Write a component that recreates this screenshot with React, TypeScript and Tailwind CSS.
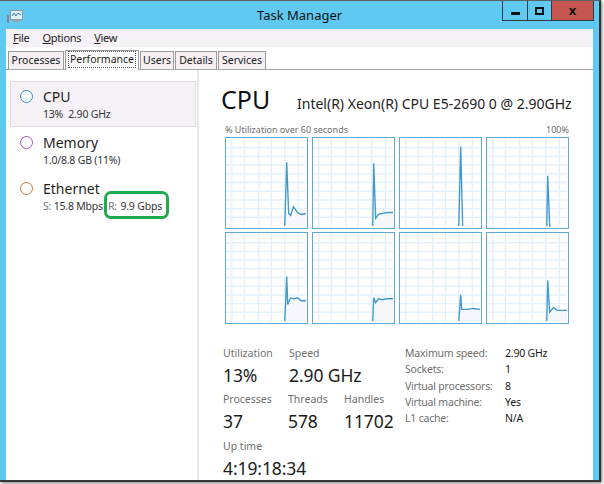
import React from 'react';

const FONT = 'font-["Noto_Sans","Open_Sans",sans-serif]';

// graph lines as traced from the picture, local coords in an 83x92 box
const GRAPHS: { line: string; fillFrom: number; fillY: number }[] = [
  { line: '61,91 63,25 65,78 67,80 70,71 74,77 78,79 83,78', fillFrom: 61, fillY: 78 },
  { line: '62,91 63,26 65,83 68,79 72,78 78,77 83,77', fillFrom: 62, fillY: 78 },
  { line: '61,91 63,9 65,91', fillFrom: 61, fillY: 91 },
  { line: '62,91 63,39 65,91 66,91', fillFrom: 62, fillY: 91 },
  { line: '61,91 63,45 64,74 67,67 70,68 74,67 78,70 83,70', fillFrom: 61, fillY: 68 },
  { line: '62,91 63,67 65,72 68,68 72,69 76,68 80,68 83,68', fillFrom: 62, fillY: 68 },
  { line: '61,91 63,64 64,79 70,79 76,78 83,79', fillFrom: 61, fillY: 79 },
  { line: '62,91 63,49 65,82 69,77 73,80 78,80 83,80', fillFrom: 62, fillY: 80 },
];

const V_LINES = [6, 19, 34, 47, 61, 75];
const H_LINES = [10, 19, 28, 37, 46, 55, 64, 73, 82];

function Graph({ line, fillFrom, fillY }: { line: string; fillFrom: number; fillY: number }) {
  return (
    <div className="w-[83px] h-[92px] border-[1.5px] border-[#5ea8d2] bg-white">
      <svg width="80" height="89" viewBox="0 0 83 92" preserveAspectRatio="none" className="block">
        {V_LINES.map((x) => (
          <line key={x} x1={x} y1="0" x2={x} y2="92" stroke="#e4f0fa" strokeWidth="1.5" />
        ))}
        {H_LINES.map((y) => (
          <line key={y} x1="0" y1={y} x2="83" y2={y} stroke="#e4f0fa" strokeWidth="1.5" />
        ))}
        <polygon points={`${fillFrom},92 ${fillFrom},${fillY} 83,${fillY} 83,92`} fill="#f6f7fd" />
        <polyline points={line} fill="none" stroke="#3f98c9" strokeWidth="1.4" />
      </svg>
    </div>
  );
}

function SideItem({
  name,
  ring,
  selected,
  children,
}: {
  name: string;
  ring: string;
  selected?: boolean;
  children: React.ReactNode;
}) {
  return (
    <div
      className={
        selected
          ? 'h-[46px] flex gap-[10px] pl-[9px] pt-[6px] border border-[#e0dbe0] bg-[#f6f1f6]'
          : 'h-[46px] flex gap-[10px] pl-[9px] pt-[6px] border border-transparent'
      }
    >
      <div className={`w-[13px] h-[13px] mt-[2px] rounded-full border-[1.5px] shrink-0 ${ring}`} />
      <div>
        <div className="text-[14px] leading-[17px] text-[#1f1f1f]">{name}</div>
        <div className="text-[10.5px] tracking-[-0.2px] leading-[15px] mt-[2px] text-[#333] whitespace-nowrap">{children}</div>
      </div>
    </div>
  );
}

function Stat({ label, value, className }: { label: string; value: string; className: string }) {
  return (
    <div className={className}>
      <div className="text-[10.5px] leading-[15px] text-[#6e6e6e] whitespace-nowrap">{label}</div>
      <div className="text-[17.5px] tracking-[-0.1px] leading-[24px] mt-[2px] text-[#1a1a1a] whitespace-nowrap">{value}</div>
    </div>
  );
}

const SPECS = [
  ['Maximum speed:', '2.90 GHz'],
  ['Sockets:', '1'],
  ['Virtual processors:', '8'],
  ['Virtual machine:', 'Yes'],
  ['L1 cache:', 'N/A'],
];

const TABS = [
  { label: 'Processes', w: 'w-[56px]' },
  { label: 'Users', w: 'w-[34px]' },
  { label: 'Details', w: 'w-[42px]' },
  { label: 'Services', w: 'w-[48px]' },
];

function Tab({ label, w }: { label: string; w: string }) {
  return (
    <div className={`${w} h-[18px] mt-[2px] pt-[1px] flex items-center justify-center text-[10.5px] text-[#222] bg-[#f3eff3] border border-[#9a9a9a] border-b-0`}>
      {label}
    </div>
  );
}

export default function App() {
  return (
    <div className={`w-[604px] h-[484px] bg-white overflow-hidden ${FONT}`}>
      <div className="w-[601px] h-[482px] flex flex-col border-t border-t-[#5a5f63] border-r-2 border-r-[#2f3438] border-b-2 border-b-[#34383b] bg-[#5fc9f2] pl-[6px] pr-[6px] shadow-[1px_1px_3px_rgba(0,0,0,0.55)]">
        {/* title bar */}
        <div className="h-[28px] shrink-0 flex items-start">
          <div className="w-[251px] pt-[9px] pl-[1px]">
            <svg width="16" height="14" viewBox="0 0 16 14">
              <rect x="3.5" y="0.5" width="12" height="9" fill="#dff2fb" stroke="#8a99a5" />
              <polyline points="5,6 7,3 9,6 11,3 14,5" fill="none" stroke="#3a7fc0" strokeWidth="1" />
              <rect x="7" y="10" width="6" height="2" fill="#9aa7b0" />
              <rect x="0" y="5" width="2" height="8" fill="#7d8a94" />
            </svg>
          </div>
          <div className="flex-1 pt-[4px] text-[13px] leading-[20px] text-[#111] whitespace-nowrap">Task Manager</div>
          <div className="flex h-[20px] -mr-[1px] border border-[#2d3e4a] border-t-0">
            <div className="w-[25px] flex items-center justify-center border-r border-[#2d3e4a]">
              <div className="w-[9px] h-[3px] mt-[5px] bg-[#111]" />
            </div>
            <div className="w-[24px] flex items-center justify-center border-r border-[#2d3e4a]">
              <div className="w-[9px] h-[8px] border-2 border-[#111]" />
            </div>
            <div className="w-[41px] flex items-center justify-center bg-[#c75650] text-[13px] font-bold text-[#111]">x</div>
          </div>
        </div>

        {/* client area */}
        <div className="flex-1 min-h-0 flex flex-col bg-white">
          <div className="h-[18px] shrink-0 bg-[#f6f1f6] flex items-center gap-[13px] pl-[7px] text-[11px] tracking-[-0.3px] text-[#222]">
            <span><span className="underline">F</span>ile</span>
            <span><span className="underline">O</span>ptions</span>
            <span><span className="underline">V</span>iew</span>
          </div>

          <div className="h-[23px] shrink-0 flex items-end pl-[2px] gap-px border-b border-[#a5a5a5] bg-white">
            <Tab {...TABS[0]} />
            <div className="w-[74px] h-[20px] -mb-px flex items-start justify-center bg-white border border-[#9a9a9a] border-b-0 text-[10.5px] text-[#222] relative">
              <span className="border border-dotted border-[#555] px-[1px] leading-[15px]">Performance</span>
            </div>
            <Tab {...TABS[1]} />
            <Tab {...TABS[2]} />
            <Tab {...TABS[3]} />
          </div>

          <div className="flex-1 min-h-0 flex">
            {/* left list */}
            <div className="relative w-[193px] shrink-0 pl-[4px] pt-[11px] pr-[1px] border-r-2 border-r-[#e8e8e8] flex flex-col">
              <SideItem name="CPU" ring="border-[#3d8cc4] bg-[#f4f9fd]" selected>
                13%&nbsp; 2.90 GHz
              </SideItem>
              <SideItem name="Memory" ring="border-[#a64dc0] bg-white">
                1.0/8.8 GB (11%)
              </SideItem>
              <SideItem name="Ethernet" ring="border-[#c67a3a] bg-white">
                <span className="text-[#777]">S:</span>&nbsp;15.8 Mbps<span className="text-[#777] ml-[5px] mr-[1px]">R:</span>&nbsp;9.9 Gbps
              </SideItem>
              {/* green callout drawn over the shot */}
              <div className="absolute left-[98px] top-[121px] w-[65px] h-[28px] rounded-[7px] border-[3px] border-[#1fab4b]" />
            </div>

            {/* right pane */}
            <div className="flex-1 min-w-0 pl-[26px] pr-[24px]">
              <div className="flex items-baseline h-[50px] pt-[14px] -ml-[4px]">
                <div className="w-[76px] shrink-0 text-[25px] leading-[30px] text-[#111]">CPU</div>
                <div className="text-[14px] text-[#222] whitespace-nowrap">Intel(R) Xeon(R) CPU E5-2690 0 @ 2.90GHz</div>
              </div>
              <div className="flex justify-between items-end h-[17px] text-[9px] leading-[14px] text-[#6e6e6e]">
                <span>% Utilization over 60 seconds</span>
                <span>100%</span>
              </div>
              <div className="grid grid-cols-[83px_83px_83px_83px] gap-x-[4px] gap-y-[3px] w-[344px]">
                {GRAPHS.map((g, i) => (
                  <Graph key={i} {...g} />
                ))}
              </div>

              <div className="flex mt-[22px] -ml-[2px]">
                <div className="w-[182px] shrink-0">
                  <div className="flex">
                    <Stat label="Utilization" value="13%" className="w-[66px]" />
                    <Stat label="Speed" value="2.90 GHz" className="" />
                  </div>
                  <div className="flex mt-[5px]">
                    <Stat label="Processes" value="37" className="w-[65px]" />
                    <Stat label="Threads" value="578" className="w-[56px]" />
                    <Stat label="Handles" value="11702" className="" />
                  </div>
                  <Stat label="Up time" value="4:19:18:34" className="mt-[6px]" />
                </div>
                <div className="text-[10.5px] tracking-[-0.2px] leading-[16.3px] -mt-[1px]">
                  {SPECS.map(([k, v]) => (
                    <div key={k} className="flex whitespace-nowrap">
                      <span className="w-[100px] text-[#6e6e6e]">{k}</span>
                      <span className="text-[#1a1a1a]">{v}</span>
                    </div>
                  ))}
                </div>
              </div>
            </div>
          </div>
        </div>
      </div>
    </div>
  );
}
